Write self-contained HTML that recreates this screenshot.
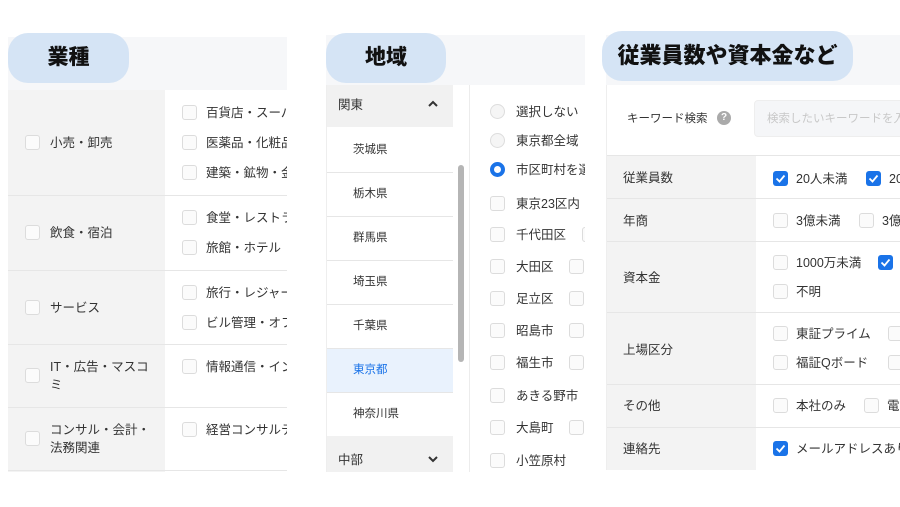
<!DOCTYPE html>
<html><head><meta charset="utf-8">
<style>
*{margin:0;padding:0;box-sizing:border-box}
body{width:900px;height:507px;background:#fff;position:relative;overflow:hidden;font-family:"Liberation Sans","Noto Sans CJK JP",sans-serif;color:#333}
div,span{position:absolute}
.t{font-size:12.5px;line-height:18px;white-space:nowrap;color:#333}
.s{font-size:11.5px;line-height:16px;white-space:nowrap;color:#333}
.cb{width:15px;height:15px;border:1px solid #dcdcdc;border-radius:3px;background:#fbfbfb}
.ck{width:15px;height:15px;border-radius:3px;background:#1a73e8}
.ck svg{position:absolute;left:2px;top:2px}
.pill{background:#d5e4f5;border-radius:20px;font-weight:900;color:#111;font-size:21px;line-height:50px;text-align:center}
.hl{height:1px;background:#e6e6e6}
.rd{width:15px;height:15px;border-radius:50%;border:1px solid #ddd;background:#f5f5f5}
</style></head><body>

<!-- Panel 1 -->
<div style="left:8px;top:37px;width:279px;height:53px;background:#f6f7f9"></div>
<div style="left:8px;top:90px;width:157px;height:382px;background:#f3f3f3"></div>
<div style="left:165px;top:90px;width:122px;height:382px;background:#fff"></div>
<div class="pill" style="left:8px;top:33px;width:121px;height:50px">業種</div>
<div class="hl" style="left:8px;top:195px;width:279px"></div>
<div class="hl" style="left:8px;top:270px;width:279px"></div>
<div class="hl" style="left:8px;top:344px;width:279px"></div>
<div class="hl" style="left:8px;top:407px;width:279px"></div>
<div class="hl" style="left:8px;top:470px;width:279px"></div>
<div style="left:8px;top:90px;width:279px;height:382px;overflow:hidden">
<div class="cb" style="left:17px;top:45px"></div><div class="t" style="left:42px;top:44px">小売・卸売</div>
<div class="cb" style="left:17px;top:135px"></div><div class="t" style="left:42px;top:134px">飲食・宿泊</div>
<div class="cb" style="left:17px;top:210px"></div><div class="t" style="left:42px;top:209px">サービス</div>
<div class="cb" style="left:17px;top:278px"></div><div class="t" style="left:42px;top:268px">IT・広告・マスコ<br>ミ</div>
<div class="cb" style="left:17px;top:341px"></div><div class="t" style="left:42px;top:331px">コンサル・会計・<br>法務関連</div>
<div class="cb" style="left:174px;top:15px"></div><div class="t" style="left:198px;top:14px">百貨店・スーパー</div>
<div class="cb" style="left:174px;top:45px"></div><div class="t" style="left:198px;top:44px">医薬品・化粧品</div>
<div class="cb" style="left:174px;top:75px"></div><div class="t" style="left:198px;top:74px">建築・鉱物・金属</div>
<div class="cb" style="left:174px;top:120px"></div><div class="t" style="left:198px;top:119px">食堂・レストラン</div>
<div class="cb" style="left:174px;top:150px"></div><div class="t" style="left:198px;top:149px">旅館・ホテル</div>
<div class="cb" style="left:174px;top:195px"></div><div class="t" style="left:198px;top:194px">旅行・レジャー</div>
<div class="cb" style="left:174px;top:225px"></div><div class="t" style="left:198px;top:224px">ビル管理・オフィス</div>
<div class="cb" style="left:174px;top:269px"></div><div class="t" style="left:198px;top:268px">情報通信・インター</div>
<div class="cb" style="left:174px;top:332px"></div><div class="t" style="left:198px;top:331px">経営コンサルティング</div>
</div>

<!-- Panel 2 -->
<div style="left:326px;top:35px;width:259px;height:50px;background:#f6f7f9"></div>
<div class="pill" style="left:326px;top:33px;width:120px;height:50px">地域</div>
<div style="left:326px;top:85px;width:259px;height:387px;overflow:hidden;background:#fff;border-left:1px solid #eee">
 <div style="left:0;top:0;width:126px;height:42px;background:#f1f1f1"></div>
 <div class="t" style="left:11px;top:11px">関東</div>
 <svg style="position:absolute;left:100px;top:15px" width="12" height="8"><path d="M2 6 L6 2 L10 6" stroke="#333" stroke-width="2" fill="none"/></svg>
 <div style="left:0;top:263px;width:126px;height:44px;background:#e9f2fd"></div>
 <div style="left:0;top:351px;width:126px;height:40px;background:#f1f1f1"></div>
 <div class="t" style="left:11px;top:366px">中部</div>
 <svg style="position:absolute;left:100px;top:370px" width="12" height="8"><path d="M2 2 L6 6 L10 2" stroke="#333" stroke-width="2" fill="none"/></svg>
 <div class="hl" style="left:0;top:87px;width:126px"></div>
 <div class="hl" style="left:0;top:131px;width:126px"></div>
 <div class="hl" style="left:0;top:175px;width:126px"></div>
 <div class="hl" style="left:0;top:219px;width:126px"></div>
 <div class="hl" style="left:0;top:263px;width:126px"></div>
 <div class="hl" style="left:0;top:307px;width:126px"></div>
 <div class="s" style="left:26px;top:57px">茨城県</div>
 <div class="s" style="left:26px;top:101px">栃木県</div>
 <div class="s" style="left:26px;top:145px">群馬県</div>
 <div class="s" style="left:26px;top:189px">埼玉県</div>
 <div class="s" style="left:26px;top:233px">千葉県</div>
 <div class="s" style="left:26px;top:277px;color:#1a73e8">東京都</div>
 <div class="s" style="left:26px;top:321px">神奈川県</div>
 <div style="left:131px;top:80px;width:6px;height:197px;background:#b5b5b5;border-radius:3px"></div>
 <div style="left:142px;top:0;width:1px;height:387px;background:#ececec"></div>
 <div class="rd" style="left:163px;top:19px"></div><div class="t" style="left:189px;top:18px">選択しない</div>
 <div class="rd" style="left:163px;top:48px"></div><div class="t" style="left:189px;top:47px">東京都全域</div>
 <div style="left:163px;top:77px;width:15px;height:15px;border-radius:50%;border:4px solid #1a73e8;background:#fff"></div><div class="t" style="left:189px;top:76px">市区町村を選択</div>
 <div class="cb" style="left:163px;top:111px"></div><div class="t" style="left:189px;top:110px">東京23区内</div>
 <div class="cb" style="left:163px;top:142px"></div><div class="t" style="left:189px;top:141px">千代田区</div><div class="cb" style="left:255px;top:142px"></div>
 <div class="cb" style="left:163px;top:174px"></div><div class="t" style="left:189px;top:173px">大田区</div><div class="cb" style="left:242px;top:174px"></div>
 <div class="cb" style="left:163px;top:206px"></div><div class="t" style="left:189px;top:205px">足立区</div><div class="cb" style="left:242px;top:206px"></div>
 <div class="cb" style="left:163px;top:238px"></div><div class="t" style="left:189px;top:237px">昭島市</div><div class="cb" style="left:242px;top:238px"></div>
 <div class="cb" style="left:163px;top:270px"></div><div class="t" style="left:189px;top:269px">福生市</div><div class="cb" style="left:242px;top:270px"></div>
 <div class="cb" style="left:163px;top:303px"></div><div class="t" style="left:189px;top:302px">あきる野市</div>
 <div class="cb" style="left:163px;top:335px"></div><div class="t" style="left:189px;top:334px">大島町</div><div class="cb" style="left:242px;top:335px"></div>
 <div class="cb" style="left:163px;top:368px"></div><div class="t" style="left:189px;top:367px">小笠原村</div>
</div>

<!-- Panel 3 -->
<div style="left:606px;top:35px;width:294px;height:50px;background:#f6f7f9"></div>
<div class="pill" style="left:602px;top:31px;width:251px;height:50px;font-size:22px">従業員数や資本金など</div>
<div style="left:606px;top:85px;width:294px;height:385px;overflow:hidden;background:#fff;border-left:1px solid #eee">
 <div class="s" style="left:20px;top:26px">キーワード検索</div>
 <div style="left:110px;top:26px;width:14px;height:14px;border-radius:50%;background:#aaa;color:#fff;font-size:10px;line-height:14px;text-align:center;font-weight:bold">?</div>
 <div style="left:147px;top:15px;width:160px;height:37px;background:#f5f6f8;border:1px solid #eee;border-radius:4px"></div>
 <div class="s" style="left:160px;top:26px;color:#c8c8c8">検索したいキーワードを入力</div>
 <div style="left:0;top:70px;width:149px;height:315px;background:#f3f3f3"></div>
 <div class="hl" style="left:0;top:70px;width:294px"></div>
 <div class="hl" style="left:0;top:113px;width:294px"></div>
 <div class="hl" style="left:0;top:156px;width:294px"></div>
 <div class="hl" style="left:0;top:227px;width:294px"></div>
 <div class="hl" style="left:0;top:299px;width:294px"></div>
 <div class="hl" style="left:0;top:342px;width:294px"></div>
 <div class="t" style="left:16px;top:84px">従業員数</div>
 <div class="t" style="left:16px;top:127px">年商</div>
 <div class="t" style="left:16px;top:184px">資本金</div>
 <div class="t" style="left:16px;top:256px">上場区分</div>
 <div class="t" style="left:16px;top:312px">その他</div>
 <div class="t" style="left:16px;top:355px">連絡先</div>
 <div class="ck" style="left:166px;top:86px"><svg width="11" height="11"><path d="M1.5 5.5 L4.5 8.5 L9.5 2.5" stroke="#fff" stroke-width="1.8" fill="none"/></svg></div><div class="t" style="left:189px;top:85px">20人未満</div>
 <div class="ck" style="left:259px;top:86px"><svg width="11" height="11"><path d="M1.5 5.5 L4.5 8.5 L9.5 2.5" stroke="#fff" stroke-width="1.8" fill="none"/></svg></div><div class="t" style="left:282px;top:85px">20人</div>
 <div class="cb" style="left:166px;top:128px"></div><div class="t" style="left:189px;top:127px">3億未満</div>
 <div class="cb" style="left:252px;top:128px"></div><div class="t" style="left:275px;top:127px">3億</div>
 <div class="cb" style="left:166px;top:170px"></div><div class="t" style="left:189px;top:169px">1000万未満</div>
 <div class="ck" style="left:271px;top:170px"><svg width="11" height="11"><path d="M1.5 5.5 L4.5 8.5 L9.5 2.5" stroke="#fff" stroke-width="1.8" fill="none"/></svg></div>
 <div class="cb" style="left:166px;top:199px"></div><div class="t" style="left:189px;top:198px">不明</div>
 <div class="cb" style="left:166px;top:241px"></div><div class="t" style="left:189px;top:240px">東証プライム</div>
 <div class="cb" style="left:281px;top:241px"></div>
 <div class="cb" style="left:166px;top:270px"></div><div class="t" style="left:189px;top:269px">福証Qボード</div>
 <div class="cb" style="left:281px;top:270px"></div>
 <div class="cb" style="left:166px;top:313px"></div><div class="t" style="left:189px;top:312px">本社のみ</div>
 <div class="cb" style="left:257px;top:313px"></div><div class="t" style="left:280px;top:312px">電話</div>
 <div class="ck" style="left:166px;top:356px"><svg width="11" height="11"><path d="M1.5 5.5 L4.5 8.5 L9.5 2.5" stroke="#fff" stroke-width="1.8" fill="none"/></svg></div><div class="t" style="left:189px;top:355px">メールアドレスあり</div>
</div>
</body></html>
